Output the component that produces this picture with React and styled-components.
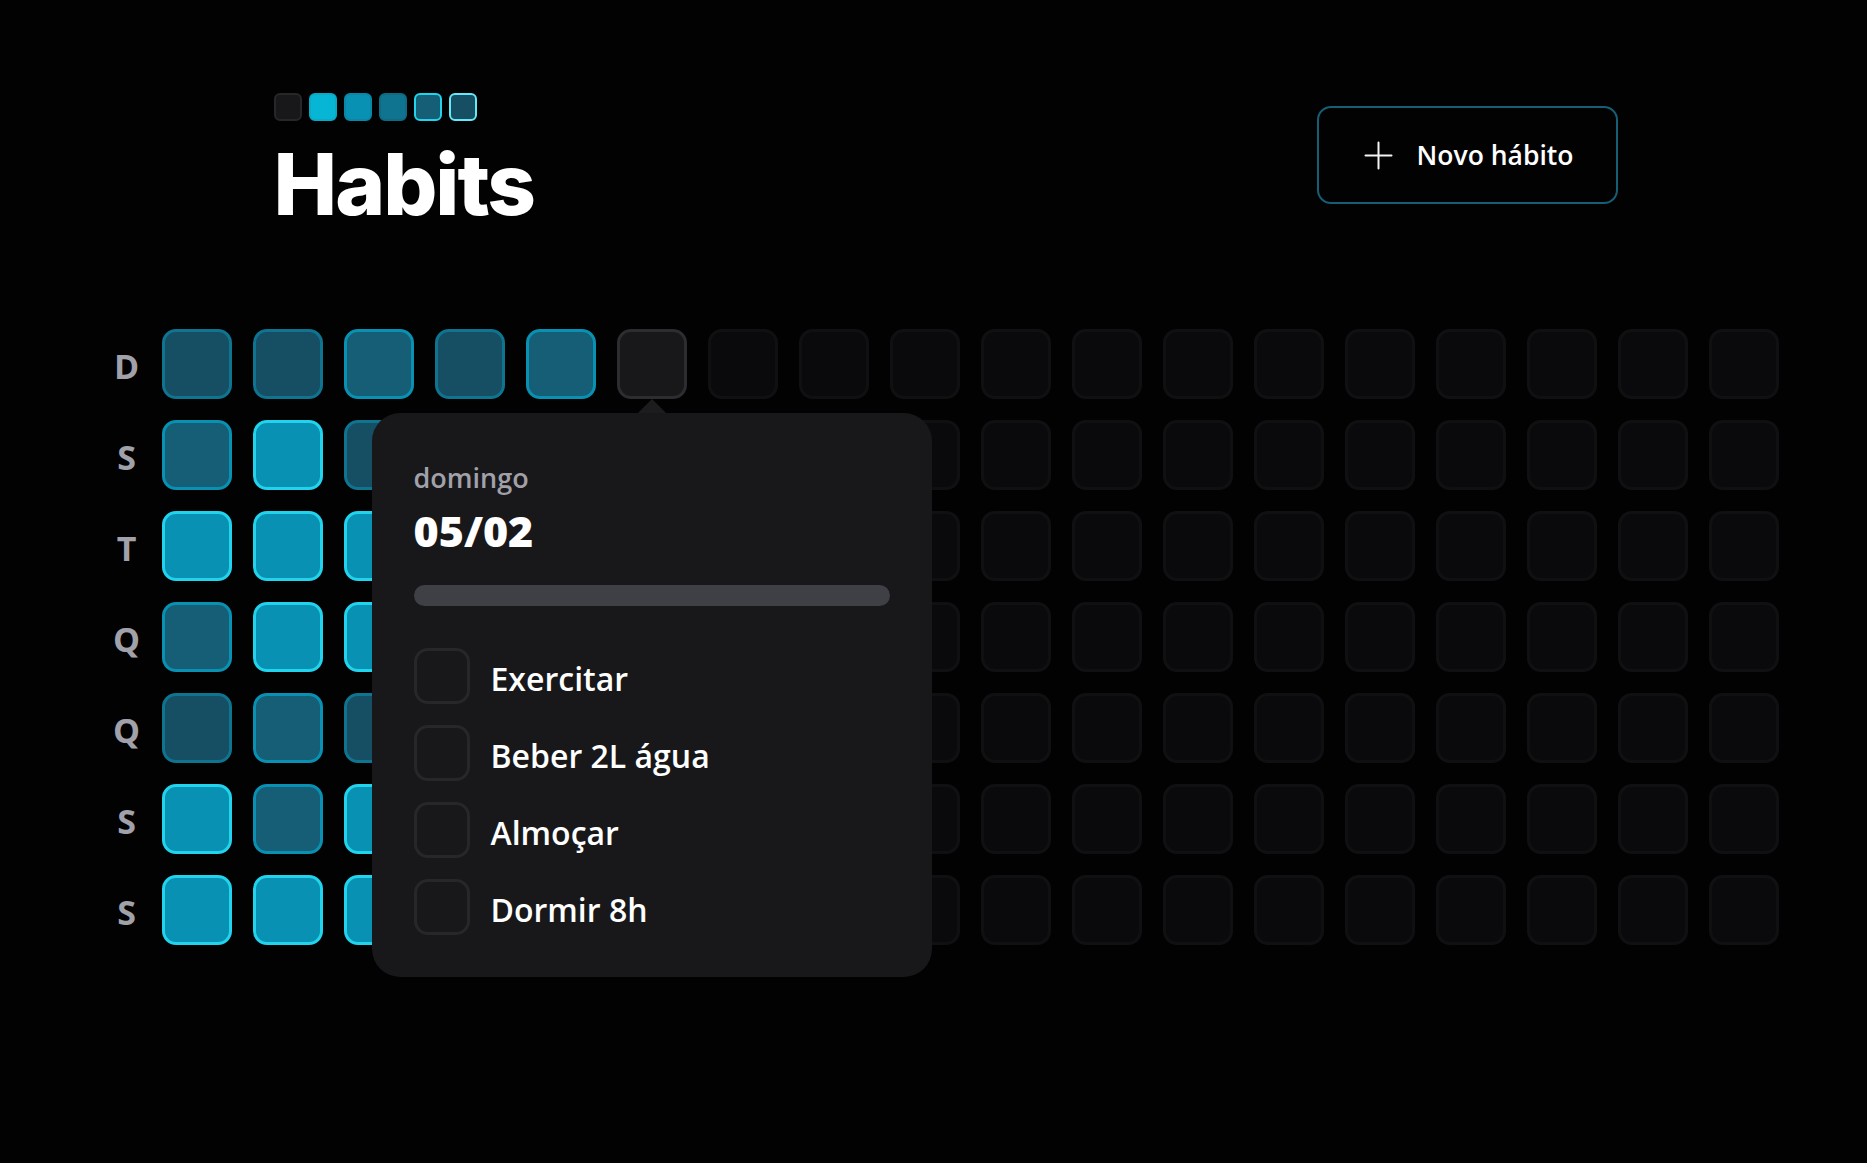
import React from 'react'
import styled, { createGlobalStyle, css } from 'styled-components'

const GlobalStyle = createGlobalStyle`
  * { box-sizing: border-box; }
  html, body { margin: 0; padding: 0; background: #020203; }
  body {
    font-family: "Open Sans", "Noto Sans", "DejaVu Sans", sans-serif;
    color: #ffffff;
  }
`

const weekDays = ['D', 'S', 'T', 'Q', 'Q', 'S', 'S']

// níveis de conclusão por coluna (linha de domingo a sábado)
const pastColumns = [
  ['a', 'b', 'c', 'b', 'a', 'c', 'c'],
  ['a', 'c', 'c', 'c', 'b', 'b', 'c'],
  ['b', 'a', 'c', 'c', 'a', 'c', 'c'],
  ['a', 'b', 'c', 'a', 'b', 'c', 'b'],
  ['b', 'c', 'a', 'b', 'c', 'b', 'c'],
]

const TOTAL_COLUMNS = 18

const buildDays = () => {
  const days = []
  for (let col = 0; col < TOTAL_COLUMNS; col++) {
    for (let row = 0; row < 7; row++) {
      if (col < pastColumns.length) days.push(pastColumns[col][row])
      else if (col === pastColumns.length && row === 0) days.push('today')
      else days.push('future')
    }
  }
  return days
}

const habits = ['Exercitar', 'Beber 2L água', 'Almoçar', 'Dormir 8h']

const logoSquares = [
  { bg: '#18181b', border: '#27272a' },
  { bg: '#06b6d4', border: '#0aa9c6' },
  { bg: '#0891b2', border: '#0a87a6' },
  { bg: '#0e7490', border: '#106a84' },
  { bg: '#155e75', border: '#22d3ee' },
  { bg: '#164e63', border: '#67e8f9' },
]

const levels = {
  a: css`background: #164e63; border-color: #0e7490;`,
  b: css`background: #155e75; border-color: #0891b2;`,
  c: css`background: #0891b2; border-color: #22d3ee;`,
  today: css`background: #18181b; border-color: #2d2d31;`,
  future: css`background: #18181b; border-color: #27272a; opacity: 0.4;`,
}

const Page = styled.div`
  min-height: 100vh;
  display: flex;
  justify-content: center;
  padding: 93px 0 0 24px;
`

const Main = styled.main`
  width: 100%;
  max-width: 1792px;
  padding: 0 42px;
  display: flex;
  flex-direction: column;
  gap: 112px;
`

const Header = styled.header`
  width: 100%;
  max-width: 1344px;
  margin: 0 auto;
  display: flex;
  align-items: center;
  justify-content: space-between;
`

const Logo = styled.div`
  display: flex;
  flex-direction: column;
`

const LogoSquares = styled.div`
  display: flex;
  gap: 7px;
`

const LogoSquare = styled.span`
  width: 28px;
  height: 28px;
  border-radius: 6px;
  border: 2px solid ${({ $border }) => $border};
  background: ${({ $bg }) => $bg};
`

const Title = styled.h1`
  margin: 32px 0 0;
  font-family: Inter, "Open Sans", sans-serif;
  font-weight: 800;
  font-size: 85px;
  line-height: 64px;
  letter-spacing: -2px;
  color: #ffffff;
`

const NewHabitButton = styled.button`
  display: flex;
  align-items: center;
  gap: 21px;
  padding: 26px 42px;
  border: 2px solid #155e75;
  border-radius: 14px;
  background: transparent;
  color: #ffffff;
  font-family: inherit;
  font-weight: 600;
  font-size: 26.5px;
  line-height: 42px;
  cursor: pointer;

  svg { flex-shrink: 0; }
`

const Table = styled.div`
  width: 100%;
  display: flex;
`

const WeekDays = styled.div`
  display: grid;
  grid-template-rows: repeat(7, 70px);
  gap: 21px;
`

const WeekDay = styled.div`
  width: 70px;
  height: 70px;
  padding-top: 4px;
  display: flex;
  align-items: center;
  justify-content: center;
  color: #a1a1aa;
  font-size: 34px;
  font-weight: 700;
`

const Days = styled.div`
  display: grid;
  grid-template-rows: repeat(7, 70px);
  grid-auto-flow: column;
  grid-auto-columns: 70px;
  gap: 21px;
`

const CellWrap = styled.div`
  position: relative;
  width: 70px;
  height: 70px;
`

const Cell = styled.div`
  width: 70px;
  height: 70px;
  border-radius: 14px;
  border: 3.5px solid;
  ${({ $level }) => levels[$level]}
`

const Popover = styled.div`
  position: absolute;
  z-index: 10;
  top: calc(100% + 14px);
  left: 50%;
  transform: translateX(-50%);
  width: 560px;
  padding: 42px;
  border-radius: 28px;
  background: #18181b;
  display: flex;
  flex-direction: column;
`

const Arrow = styled.svg`
  position: absolute;
  top: -14px;
  left: 50%;
  transform: translateX(-50%);
  display: block;
`

const WeekDayName = styled.span`
  padding-top: 3px;
  font-weight: 600;
  font-size: 27px;
  line-height: 39px;
  color: #a1a1aa;
`

const DateLabel = styled.span`
  margin-top: 7px;
  padding-top: 2px;
  font-weight: 800;
  font-size: 43px;
  line-height: 50.5px;
  color: #ffffff;
`

const Progress = styled.div`
  margin-top: 28px;
  height: 21px;
  width: 100%;
  border-radius: 21px;
  background: #3f3f46;
  overflow: hidden;
`

const ProgressIndicator = styled.div`
  height: 100%;
  background: #0891b2;
`

const HabitList = styled.div`
  margin-top: 42px;
  display: flex;
  flex-direction: column;
  gap: 21px;
`

const HabitItem = styled.label`
  display: flex;
  align-items: center;
  gap: 21px;
  cursor: pointer;
`

const CheckBox = styled.span`
  width: 56px;
  height: 56px;
  flex-shrink: 0;
  border-radius: 14px;
  border: 3.5px solid #27272a;
  background: #18181b;
`

const HabitTitle = styled.span`
  padding-top: 6px;
  font-weight: 600;
  font-size: 32px;
  line-height: 1.25;
  color: #ffffff;
`

const PlusIcon = () => (
  <svg width="35" height="35" viewBox="0 0 35 35" fill="none">
    <path d="M4.5 17.5h26M17.5 4.5v26" stroke="#f4f4f5" strokeWidth="2" strokeLinecap="round" />
  </svg>
)

const DayPopover = () => (
  <Popover>
    <Arrow width="28" height="14" viewBox="0 0 28 14">
      <path d="M0 14 L14 0 L28 14 Z" fill="#1c1c1f" />
    </Arrow>
    <WeekDayName>domingo</WeekDayName>
    <DateLabel>05/02</DateLabel>
    <Progress>
      <ProgressIndicator style={{ width: '0%' }} />
    </Progress>
    <HabitList>
      {habits.map((habit) => (
        <HabitItem key={habit}>
          <CheckBox />
          <HabitTitle>{habit}</HabitTitle>
        </HabitItem>
      ))}
    </HabitList>
  </Popover>
)

const App = () => {
  const days = buildDays()
  return (
    <>
      <GlobalStyle />
      <Page>
        <Main>
          <Header>
            <Logo>
              <LogoSquares>
                {logoSquares.map((sq, i) => (
                  <LogoSquare key={i} $bg={sq.bg} $border={sq.border} />
                ))}
              </LogoSquares>
              <Title>Habits</Title>
            </Logo>
            <NewHabitButton type="button">
              <PlusIcon />
              Novo hábito
            </NewHabitButton>
          </Header>

          <Table>
            <WeekDays>
              {weekDays.map((day, i) => (
                <WeekDay key={i}>{day}</WeekDay>
              ))}
            </WeekDays>
            <Days>
              {days.map((level, i) => (
                <CellWrap key={i}>
                  <Cell $level={level} />
                  {level === 'today' && <DayPopover />}
                </CellWrap>
              ))}
            </Days>
          </Table>
        </Main>
      </Page>
    </>
  )
}

export default App
